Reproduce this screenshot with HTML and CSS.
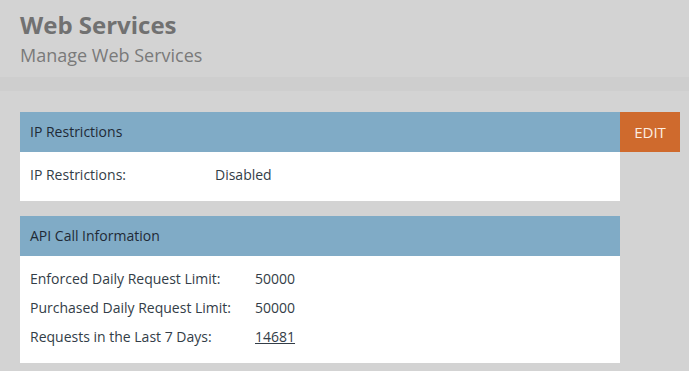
FILE: index.html
```html
<!DOCTYPE html>
<html lang="en">
<head>
    <meta charset="UTF-8">
    <title>Web Services</title>
    <link rel="stylesheet" href="styles.css">
</head>
<body>
    <div class="header">
        <h1>Web Services</h1>
        <div class="subtitle">Manage Web Services</div>
    </div>
    <div class="band"></div>
    <div class="content">
        <div class="panel-row">
            <div class="panel">
                <div class="panel-head">IP Restrictions</div>
                <div class="panel-body ip">
                    <span>IP Restrictions:</span>
                    <span>Disabled</span>
                </div>
            </div>
            <button class="edit">EDIT</button>
        </div>
        <div class="panel-row">
            <div class="panel">
                <div class="panel-head">API Call Information</div>
                <div class="panel-body api">
                    <span>Enforced Daily Request Limit:</span>
                    <span>50000</span>
                    <span>Purchased Daily Request Limit:</span>
                    <span>50000</span>
                    <span>Requests in the Last 7 Days:</span>
                    <span><a href="#">14681</a></span>
                </div>
            </div>
        </div>
    </div>
</body>
</html>
```

FILE: styles.css
```css
body{
    font-family: 'Open Sans', 'Liberation Sans', sans-serif;
    background-color: #d3d3d3;
    margin: 0;
    color: #333d47;
}
.header{
    padding: 9px 20px 0;
    height: 77px;
    box-sizing: border-box;
}
h1{
    margin: 0;
    font-size: 24px;
    line-height: 32px;
    font-weight: bold;
    color: #717171;
}
.subtitle{
    font-size: 18px;
    line-height: 28px;
    color: #7a7a7a;
}
.band{
    height: 14px;
    background-color: #cecece;
}
.content{
    padding: 21px 20px 0;
}
.panel-row{
    display: flex;
    align-items: flex-start;
    margin-bottom: 15px;
}
.panel{
    width: 600px;
    flex-shrink: 0;
    background-color: #fff;
}
.panel-head{
    background-color: #80abc6;
    height: 40px;
    line-height: 40px;
    padding: 0 10px;
    font-size: 14px;
    color: #1f2a36;
}
.panel-body{
    display: grid;
    padding: 8px 10px 12px;
    font-size: 14px;
    line-height: 29px;
}
.ip{
    grid-template-columns: 185px auto;
}
.api{
    grid-template-columns: 225px auto;
}
.panel-body a{
    color: #333d47;
}
.edit{
    width: 60px;
    height: 40px;
    flex-shrink: 0;
    border: none;
    background-color: #cf6a2d;
    color: #fdeee2;
    font-family: inherit;
    font-size: 15px;
    padding: 0;
    cursor: pointer;
}
```
